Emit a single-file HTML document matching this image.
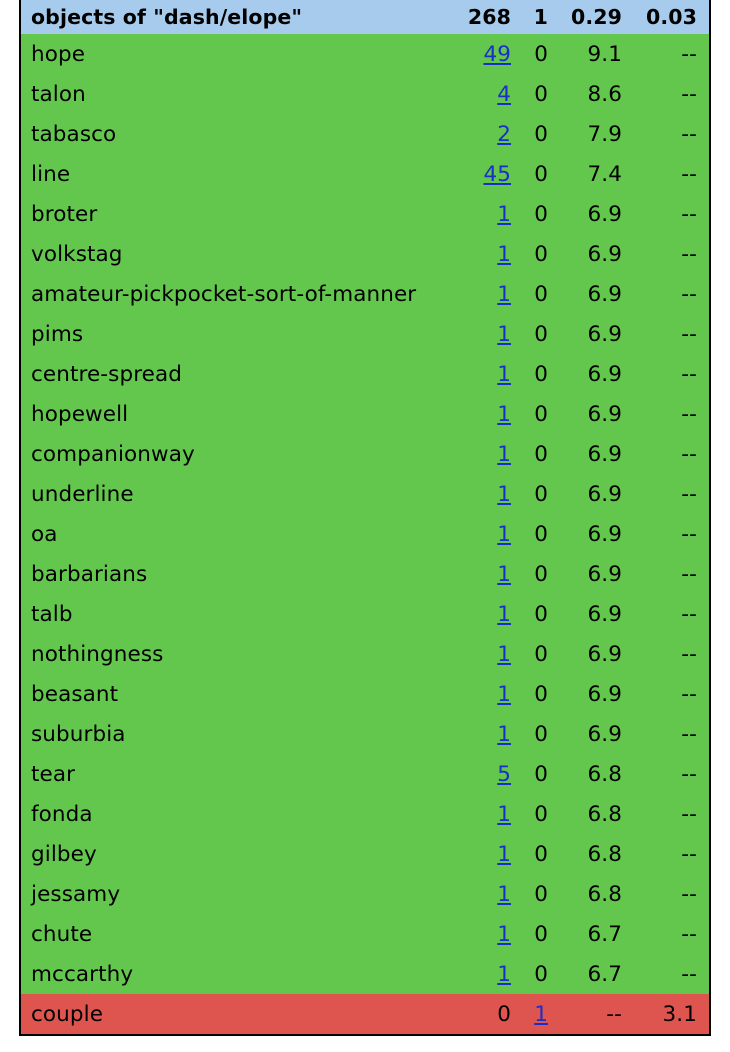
<!DOCTYPE html>
<html><head><meta charset="utf-8"><style>
*{margin:0;padding:0}
body{width:730px;height:1052px;background:#fff;position:relative;font-family:"DejaVu Sans","Liberation Sans",sans-serif;font-size:21.5px;color:#000}
.t{position:absolute;left:19px;top:0;width:688px;border:2px solid #000;border-top:none}
.r{position:relative;height:40px;line-height:42px;background:#63c74e}
.h{height:34px;line-height:34px;background:#a7cbec;font-weight:bold;font-size:20.5px}
.red{background:#de5550}
.r span{position:absolute;top:0;letter-spacing:0.1px}
.n{left:10px}
.a{right:198px;text-align:right}
.b{right:161px}
.c{right:87px}
.d{right:12px}
a{color:#1a2fc8;text-decoration:underline}
</style></head><body>
<div class="t">
<div class="r h"><span class="n">objects of "dash/elope"</span><span class="a">268</span><span class="b">1</span><span class="c">0.29</span><span class="d">0.03</span></div>
<div class="r"><span class="n">hope</span><span class="a"><a>49</a></span><span class="b">0</span><span class="c">9.1</span><span class="d">--</span></div>
<div class="r"><span class="n">talon</span><span class="a"><a>4</a></span><span class="b">0</span><span class="c">8.6</span><span class="d">--</span></div>
<div class="r"><span class="n">tabasco</span><span class="a"><a>2</a></span><span class="b">0</span><span class="c">7.9</span><span class="d">--</span></div>
<div class="r"><span class="n">line</span><span class="a"><a>45</a></span><span class="b">0</span><span class="c">7.4</span><span class="d">--</span></div>
<div class="r"><span class="n">broter</span><span class="a"><a>1</a></span><span class="b">0</span><span class="c">6.9</span><span class="d">--</span></div>
<div class="r"><span class="n">volkstag</span><span class="a"><a>1</a></span><span class="b">0</span><span class="c">6.9</span><span class="d">--</span></div>
<div class="r"><span class="n">amateur-pickpocket-sort-of-manner</span><span class="a"><a>1</a></span><span class="b">0</span><span class="c">6.9</span><span class="d">--</span></div>
<div class="r"><span class="n">pims</span><span class="a"><a>1</a></span><span class="b">0</span><span class="c">6.9</span><span class="d">--</span></div>
<div class="r"><span class="n">centre-spread</span><span class="a"><a>1</a></span><span class="b">0</span><span class="c">6.9</span><span class="d">--</span></div>
<div class="r"><span class="n">hopewell</span><span class="a"><a>1</a></span><span class="b">0</span><span class="c">6.9</span><span class="d">--</span></div>
<div class="r"><span class="n">companionway</span><span class="a"><a>1</a></span><span class="b">0</span><span class="c">6.9</span><span class="d">--</span></div>
<div class="r"><span class="n">underline</span><span class="a"><a>1</a></span><span class="b">0</span><span class="c">6.9</span><span class="d">--</span></div>
<div class="r"><span class="n">oa</span><span class="a"><a>1</a></span><span class="b">0</span><span class="c">6.9</span><span class="d">--</span></div>
<div class="r"><span class="n">barbarians</span><span class="a"><a>1</a></span><span class="b">0</span><span class="c">6.9</span><span class="d">--</span></div>
<div class="r"><span class="n">talb</span><span class="a"><a>1</a></span><span class="b">0</span><span class="c">6.9</span><span class="d">--</span></div>
<div class="r"><span class="n">nothingness</span><span class="a"><a>1</a></span><span class="b">0</span><span class="c">6.9</span><span class="d">--</span></div>
<div class="r"><span class="n">beasant</span><span class="a"><a>1</a></span><span class="b">0</span><span class="c">6.9</span><span class="d">--</span></div>
<div class="r"><span class="n">suburbia</span><span class="a"><a>1</a></span><span class="b">0</span><span class="c">6.9</span><span class="d">--</span></div>
<div class="r"><span class="n">tear</span><span class="a"><a>5</a></span><span class="b">0</span><span class="c">6.8</span><span class="d">--</span></div>
<div class="r"><span class="n">fonda</span><span class="a"><a>1</a></span><span class="b">0</span><span class="c">6.8</span><span class="d">--</span></div>
<div class="r"><span class="n">gilbey</span><span class="a"><a>1</a></span><span class="b">0</span><span class="c">6.8</span><span class="d">--</span></div>
<div class="r"><span class="n">jessamy</span><span class="a"><a>1</a></span><span class="b">0</span><span class="c">6.8</span><span class="d">--</span></div>
<div class="r"><span class="n">chute</span><span class="a"><a>1</a></span><span class="b">0</span><span class="c">6.7</span><span class="d">--</span></div>
<div class="r"><span class="n">mccarthy</span><span class="a"><a>1</a></span><span class="b">0</span><span class="c">6.7</span><span class="d">--</span></div>
<div class="r red"><span class="n">couple</span><span class="a">0</span><span class="b"><a>1</a></span><span class="c">--</span><span class="d">3.1</span></div>
</div>
</body></html>
